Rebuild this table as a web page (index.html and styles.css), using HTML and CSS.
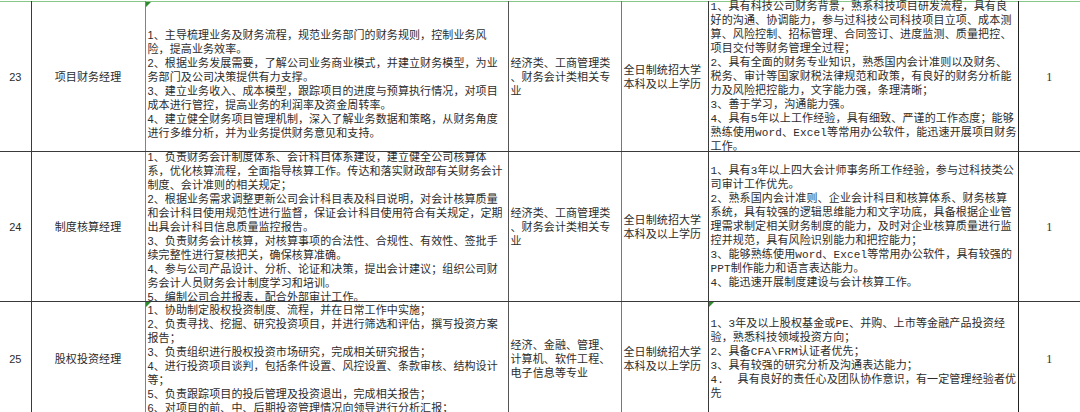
FILE: index.html
```html
<!DOCTYPE html>
<html lang="zh-CN">
<head>
<meta charset="utf-8">
<title>岗位表</title>
<link rel="stylesheet" href="styles.css">
</head>
<body>
<table class="sheet">
  <colgroup>
    <col class="w-no"><col class="w-title"><col class="w-duty"><col class="w-major"><col class="w-edu"><col class="w-req"><col class="w-num">
  </colgroup>
  <tbody>
    <tr class="r-tall">
      <td class="c-no"><div class="cell center">23</div></td>
      <td class="c-title"><div class="cell center">项目财务经理</div></td>
      <td class="c-duty mark"><div class="cell left shift">1、主导梳理业务及财务流程，规范业务部门的财务规则，控制业务风<br>险，提高业务效率。<br>2、根据业务发展需要，了解公司业务商业模式，并建立财务模型，为业<br>务部门及公司决策提供有力支撑。<br>3、建立业务收入、成本模型，跟踪项目的进度与预算执行情况，对项目<br>成本进行管控，提高业务的利润率及资金周转率。<br>4、建立健全财务项目管理机制，深入了解业务数据和策略，从财务角度<br>进行多维分析，并为业务提供财务意见和支持。</div></td>
      <td class="c-major"><div class="cell left">经济类、工商管理类<br>、财务会计类相关专<br>业</div></td>
      <td class="c-edu"><div class="cell left">全日制统招大学<br>本科及以上学历</div></td>
      <td class="c-req"><div class="cell left">1、具有科技公司财务背景，熟系科技项目研发流程，具有良<br>好的沟通、协调能力，参与过科技公司科技项目立项、成本测<br>算、风险控制、招标管理、合同签订、进度监测、质量把控、<br>项目交付等财务管理全过程；<br>2、具有全面的财务专业知识，熟悉国内会计准则以及财务、<br>税务、审计等国家财税法律规范和政策，有良好的财务分析能<br>力及风险把控能力，文字能力强，条理清晰；<br>3、善于学习，沟通能力强。<br>4、具有5年以上工作经验，具有细致、严谨的工作态度；能够<br>熟练使用word、Excel等常用办公软件，能迅速开展项目财务<br>工作。</div></td>
      <td class="c-num"><div class="cell center">1</div></td>
    </tr>
    <tr class="r-tall">
      <td class="c-no"><div class="cell center">24</div></td>
      <td class="c-title"><div class="cell center">制度核算经理</div></td>
      <td class="c-duty"><div class="cell left">1、负责财务会计制度体系、会计科目体系建设，建立健全公司核算体<br>系，优化核算流程，全面指导核算工作。传达和落实财政部有关财务会计<br>制度、会计准则的相关规定；<br>2、根据业务需求调整更新公司会计科目表及科目说明，对会计核算质量<br>和会计科目使用规范性进行监督，保证会计科目使用符合有关规定，定期<br>出具会计科目信息质量监控报告。<br>3、负责财务会计核算，对核算事项的合法性、合规性、有效性、签批手<br>续完整性进行复核把关，确保核算准确。<br>4、参与公司产品设计、分析、论证和决策，提出会计建议；组织公司财<br>务会计人员财务会计制度学习和培训。<br>5、编制公司合并报表，配合外部审计工作。</div></td>
      <td class="c-major"><div class="cell left">经济类、工商管理类<br>、财务会计类相关专<br>业</div></td>
      <td class="c-edu"><div class="cell left">全日制统招大学<br>本科及以上学历</div></td>
      <td class="c-req"><div class="cell left">1、具有3年以上四大会计师事务所工作经验，参与过科技类公<br>司审计工作优先。<br>2、熟系国内会计准则、企业会计科目和核算体系、财务核算<br>系统，具有较强的逻辑思维能力和文字功底，具备根据企业管<br>理需求制定相关财务制度的能力，及时对企业核算质量进行监<br>控并规范，具有风险识别能力和把控能力；<br>3、能够熟练使用word、Excel等常用办公软件，具有较强的<br>PPT制作能力和语言表达能力。<br>4、能迅速开展制度建设与会计核算工作。</div></td>
      <td class="c-num"><div class="cell center">1</div></td>
    </tr>
    <tr class="r-short">
      <td class="c-no"><div class="cell center">25</div></td>
      <td class="c-title"><div class="cell center">股权投资经理</div></td>
      <td class="c-duty mark"><div class="cell left">1、协助制定股权投资制度、流程，并在日常工作中实施；<br>2、负责寻找、挖掘、研究投资项目，并进行筛选和评估，撰写投资方案<br>报告；<br>3、负责组织进行股权投资市场研究，完成相关研究报告；<br>4、进行投资项目谈判，包括条件设置、风控设置、条款审核、结构设计<br>等；<br>5、负责跟踪项目的投后管理及投资退出，完成相关报告；<br>6、对项目的前、中、后期投资管理情况向领导进行分析汇报；</div></td>
      <td class="c-major"><div class="cell left">经济、金融、管理、<br>计算机、软件工程、<br>电子信息等专业</div></td>
      <td class="c-edu"><div class="cell left">全日制统招大学<br>本科及以上学历</div></td>
      <td class="c-req mark"><div class="cell left">1、3年及以上股权基金或PE、并购、上市等金融产品投资经<br>验，熟悉科技领域投资方向；<br>2、具备CFA\FRM认证者优先；<br>3、具有较强的研究分析及沟通表达能力；<br>4.&nbsp;&nbsp;具有良好的责任心及团队协作意识，有一定管理经验者优<br>先</div></td>
      <td class="c-num"><div class="cell center">1</div></td>
    </tr>
  </tbody>
</table>
</body>
</html>
```

FILE: styles.css
```css
html, body {
  margin: 0;
  padding: 0;
  background: #ffffff;
}

body {
  width: 1080px;
  height: 412px;
  overflow: hidden;
}

.sheet {
  table-layout: fixed;
  border-collapse: collapse;
  width: 1080px;
  margin-top: 1px;
  color: #2c2c2c;
  font-family: "Liberation Sans", "Noto Sans CJK SC", sans-serif;
  font-size: 11px;
}

.w-no { width: 31px; }
.w-title { width: 114px; }
.w-duty { width: 363px; }
.w-major { width: 113px; }
.w-edu { width: 87px; }
.w-req { width: 310px; }
.w-num { width: 62px; }

.sheet td {
  padding: 0;
  border: 1px solid #3a3a3a;
  vertical-align: middle;
}

.sheet tr:first-child td {
  border-top: 1px solid #86c686;
}

.sheet td.c-no { border-left: none; }
.sheet td.c-num { border-right: none; }

.sheet td.c-title { border-right: 1px solid #4fa64f; }
.sheet td.c-duty { border-left: 1px solid #4fa64f; border-right-color: #555555; }
.sheet td.c-major { border-right-color: #777777; }
.sheet td.c-req { border-left-color: #111111; border-right-color: #222222; }

.cell {
  box-sizing: border-box;
  display: flex;
  flex-direction: column;
  justify-content: center;
  line-height: 14px;
  white-space: nowrap;
}

.r-tall .cell { height: 149px; }
.r-short .cell { height: 114px; }

.cell.center {
  align-items: center;
  text-align: center;
}

.cell.left {
  align-items: flex-start;
  text-align: left;
  padding-left: 2px;
}

.cell.shift { padding-top: 15px; }

.c-duty .cell { letter-spacing: 0.1px; }
.c-major .cell,
.c-edu .cell { letter-spacing: 0.1px; }

.c-req .cell {
  font-family: "Liberation Mono", "Noto Sans CJK SC", monospace;
  letter-spacing: 0.15px;
  padding-left: 2px;
}

.c-num .cell {
  font-family: "Liberation Serif", serif;
  font-size: 12px;
}

.c-title .cell { letter-spacing: 0.1px; }

.mark { position: relative; }
.mark::before {
  content: "";
  position: absolute;
  top: 0;
  left: 0;
  width: 0;
  height: 0;
  border-top: 5px solid #2e8b2e;
  border-right: 5px solid transparent;
}
```
